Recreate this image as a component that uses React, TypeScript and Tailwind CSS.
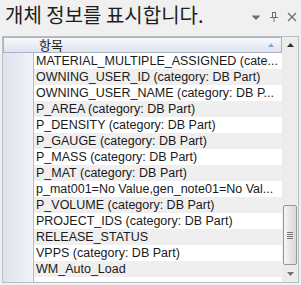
import React from 'react';

const rows = [
  'MATERIAL_MULTIPLE_ASSIGNED (cate...',
  'OWNING_USER_ID (category: DB Part)',
  'OWNING_USER_NAME (category: DB P...',
  'P_AREA (category: DB Part)',
  'P_DENSITY (category: DB Part)',
  'P_GAUGE (category: DB Part)',
  'P_MASS (category: DB Part)',
  'P_MAT (category: DB Part)',
  'p_mat001=No Value,gen_note01=No Val...',
  'P_VOLUME (category: DB Part)',
  'PROJECT_IDS (category: DB Part)',
  'RELEASE_STATUS',
  'VPPS (category: DB Part)',
  'WM_Auto_Load',
];

const App = () => {
  return (
    <div className="w-[301px] h-[285px] bg-[#f0f0f0] overflow-hidden flex flex-col">
      {/* title bar */}
      <div className="h-[36px] flex items-start pl-[5px] pr-[4px]">
        <span
          className="mt-[2px] text-[20px] leading-[26px] text-[#1e1e1e] whitespace-nowrap"
          style={{ fontFamily: '"Noto Sans CJK KR", sans-serif' }}
        >
          개체 정보를 표시합니다.
        </span>
        <div className="ml-auto mt-[12px] flex items-center gap-[9px] text-[#6e6e6e]">
          <svg width="10" height="10" viewBox="0 0 10 10">
            <path d="M0.5 3.5 H9.5 L5 8 Z" fill="#6e6e6e" />
          </svg>
          <svg width="8" height="10" viewBox="0 0 8 10">
            <rect x="2.5" y="0.5" width="3" height="5" fill="none" stroke="#6e6e6e" />
            <path d="M0 5.5 H8" stroke="#6e6e6e" />
            <path d="M4 6 V10" stroke="#6e6e6e" />
          </svg>
          <svg width="10" height="10" viewBox="0 0 10 10">
            <path d="M1 1 L9 9 M9 1 L1 9" stroke="#6e6e6e" strokeWidth="1.3" />
          </svg>
        </div>
      </div>

      {/* property panel */}
      <div className="ml-[2px] w-[297px] h-[247px] border border-[#b9bec7] bg-white flex">
        <div className="w-[279px] flex flex-col">
          <div className="h-[16px] border border-[#aab3c5] bg-gradient-to-b from-[#f8f9fc] to-[#dde2ec] flex items-center">
            <span
              className="ml-[35px] text-[13px] leading-[14px] text-[#1e1e1e]"
              style={{ fontFamily: '"Noto Sans CJK KR", sans-serif' }}
            >
              항목
            </span>
            <svg className="ml-auto mr-[7px]" width="6" height="4" viewBox="0 0 6 4">
              <path d="M0 4 L3 0.5 L6 4 Z" fill="#7fa6c8" />
            </svg>
          </div>
          <div className="flex flex-1">
            <div className="w-[31px] border-r border-[#aebbd6] bg-gradient-to-r from-[#dce1ec] to-[#f2f4f8]" />
            <div className="flex-1 flex flex-col overflow-hidden">
              {rows.map((r, i) => (
                <div
                  key={r}
                  className={`h-[16px] pl-[2px] pr-[2px] text-[12.5px] leading-[16px] text-[#1a1a1a] whitespace-nowrap overflow-hidden ${i % 2 === 1 ? 'bg-[#efefef]' : 'bg-white'}`}
                  style={{ fontFamily: '"Liberation Sans", sans-serif' }}
                >
                  {r}
                </div>
              ))}
            </div>
          </div>
        </div>

        {/* scrollbar */}
        <div className="w-[16px] ml-auto bg-[#ececec] flex flex-col items-center">
          <div className="h-[16px] w-full flex items-center justify-center">
            <svg width="7" height="4" viewBox="0 0 7 4">
              <path d="M0 4 L3.5 0 L7 4 Z" fill="#303030" />
            </svg>
          </div>
          <div className="flex-1" />
          <div className="w-[14px] h-[60px] rounded-[2px] border border-[#979797] bg-gradient-to-r from-[#f5f5f5] to-[#d9d9d9] flex flex-col items-center justify-center gap-[1px]">
            <div className="w-[6px] h-[1px] bg-[#777]" />
            <div className="w-[6px] h-[1px] bg-[#777]" />
            <div className="w-[6px] h-[1px] bg-[#777]" />
            <div className="w-[6px] h-[1px] bg-[#777]" />
          </div>
          <div className="h-[17px] w-full flex items-center justify-center">
            <svg width="7" height="4" viewBox="0 0 7 4">
              <path d="M0 0 L3.5 4 L7 0 Z" fill="#707070" />
            </svg>
          </div>
        </div>
      </div>
    </div>
  );
};

export default App;
